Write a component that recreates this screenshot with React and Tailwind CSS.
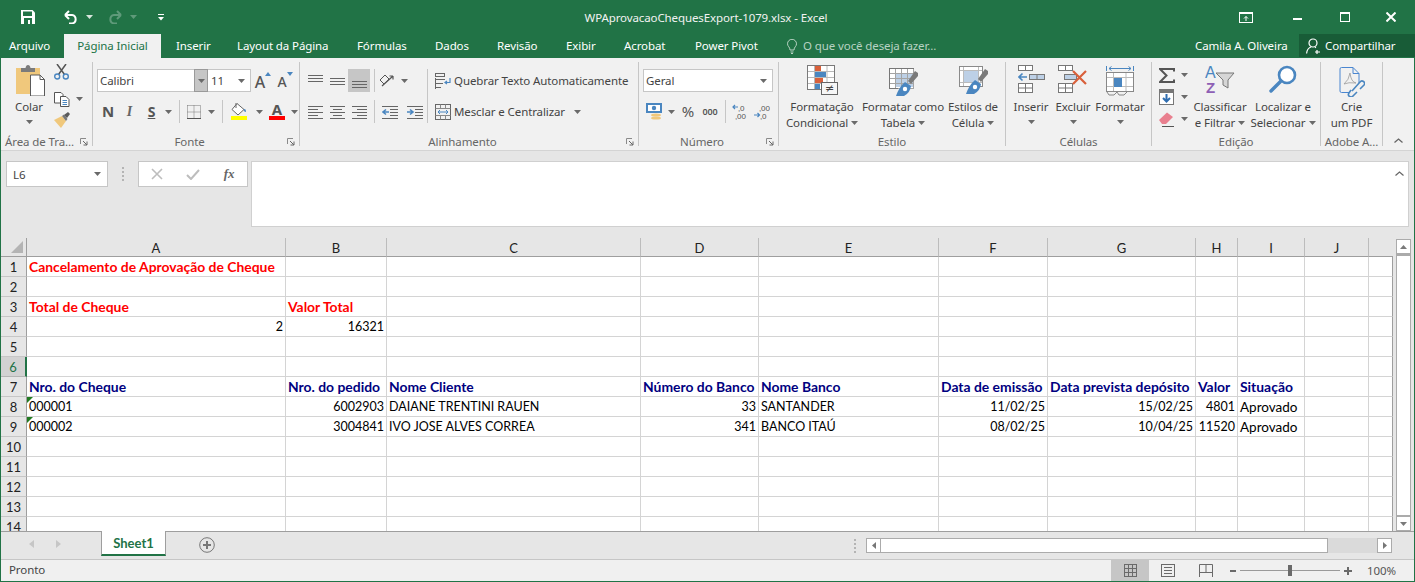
import React from "react";

const S = ({ w, h, children, className = "" }) => (
  <svg width={w} height={h} viewBox={`0 0 ${w} ${h}`} className={`shrink-0 block ${className}`}>{children}</svg>
);
const Caret = ({ c = "#6a6a6a", up }) => (
  <S w={7} h={4}><path d={up ? "M0 4 L3.5 0 L7 4Z" : "M0 0 H7 L3.5 4Z"} fill={c} /></S>
);
const B = ({ className = "", children }) => (
  <div className={`flex items-center justify-center shrink-0 h-full ${className}`}>{children}</div>
);
const Sep = ({ className = "" }) => <div className={`w-px bg-[#c6c6c6] shrink-0 ${className}`} />;
const BL = "#4a86c0";

const Launcher = () => (
  <S w={8} h={8}>
    <path d="M0.5 6V0.5H6" fill="none" stroke="#8a8a8a" />
    <path d="M3 3L7 7M7 3.5V7H3.5" fill="none" stroke="#666" />
  </S>
);

const Group = ({ className, label, launcher, children, labelClass = "text-center" }) => (
  <div className={`flex flex-col shrink-0 h-[84px] border-r border-[#c6c6c6] ${className}`}>
    <div className="h-[75px] flex">{children}</div>
    <div className="h-[9px] flex items-center">
      <div className={`flex-1 leading-[16px] text-[#666] whitespace-nowrap ${labelClass}`}>{label}</div>
      {launcher && <div className="mr-[4px] ml-[1px]"><Launcher /></div>}
    </div>
  </div>
);

const Big = ({ className = "", icon, lines, caret, caretOwn }) => (
  <div className={`flex flex-col items-center shrink-0 ${className}`}>
    <div className="h-[37px] pt-[3px] flex justify-center">{icon}</div>
    {lines.map((l, i) => (
      <div key={i} className="h-[16px] leading-[16px] whitespace-nowrap flex items-center gap-[3px]">
        {l}
        {caret && i === lines.length - 1 && <Caret />}
      </div>
    ))}
    {caretOwn && <div className="h-[14px] flex items-center"><Caret /></div>}
  </div>
);

/* ---------- ribbon icons ---------- */
const Paste = () => (
  <S w={29} h={31} className="ml-[2px]">
    <rect x="0" y="3" width="24" height="26" fill="#f0c87c" />
    <path d="M5 7V3H9.5Q10 0 12 0T14.5 3H19V7Z" fill="#7b7b7b" />
    <path d="M14.5 10H24L28.5 14.5V31H14.5Z" fill="#fff" stroke="#5a5a5a" />
    <path d="M24 10V14.5H28.5" fill="none" stroke="#5a5a5a" />
  </S>
);
const Scissors = () => (
  <S w={15} h={16}>
    <path d="M3 0L10.5 10.5M12 0L4.5 10.5" stroke="#555" strokeWidth="1.5" fill="none" />
    <circle cx="3.2" cy="12.5" r="2.5" fill="none" stroke={BL} strokeWidth="1.4" />
    <circle cx="11.8" cy="12.5" r="2.5" fill="none" stroke={BL} strokeWidth="1.4" />
  </S>
);
const Copy = () => (
  <S w={16} h={15}>
    <path d="M.5.5H7L9 2.5V11H.5Z" fill="#fff" stroke="#555" />
    <path d="M6.5 4.5H12L15 7.5V14.5H6.5Z" fill="#fff" stroke="#555" />
    <path d="M8.5 8.5H13M8.5 10.5H13M8.5 12.5H13" stroke={BL} />
  </S>
);
const Brush = () => (
  <S w={17} h={16}>
    <path d="M0 8L8 4L12 9L7 16Z" fill="#f0c87c" />
    <path d="M8 4L10 2.5L13.5 7L12 9Z" fill="#777" />
    <path d="M10 3L14 0L16 2L13 6Z" fill="#5a5a5a" />
  </S>
);
const lines = (arr, w = 15) => (
  <S w={w} h={14}>
    {arr.map(([x, y, l, c], i) => <rect key={i} x={x} y={y} width={l} height="1" fill={c || "#666"} />)}
  </S>
);
const AlTop = () => lines([[0, 1, 15], [0, 4, 15], [0, 7, 15]]);
const AlMid = () => lines([[0, 4, 15], [0, 7, 15], [0, 10, 15]]);
const AlBot = () => lines([[0, 7, 15], [0, 10, 15], [0, 13, 15]]);
const AlL = () => lines([[0, 1, 15], [0, 4, 10], [0, 7, 15], [0, 10, 10], [0, 13, 15]]);
const AlC = () => lines([[0, 1, 15], [3, 4, 9], [0, 7, 15], [3, 10, 9], [0, 13, 15]]);
const AlR = () => lines([[0, 1, 15], [5, 4, 10], [0, 7, 15], [5, 10, 10], [0, 13, 15]]);
const Indent = ({ right }) => (
  <S w={16} h={14}>
    {[1, 13].map((y) => <rect key={y} x="0" y={y} width="16" height="1" fill="#666" />)}
    {[4, 7, 10].map((y) => <rect key={y} x="8" y={y} width="8" height="1" fill="#666" />)}
    <path d={right ? "M0 7H5M3 4.5L6 7L3 9.5" : "M7 7H2M4 4.5L1 7L4 9.5"} stroke={BL} strokeWidth="1.6" fill="none" />
  </S>
);
const Orient = () => (
  <S w={16} h={16}>
    <path d="M1 7L6 2L10 6L5 11Z" fill="none" stroke="#555" />
    <path d="M3 13L14 3M14 3H10.5M14 3V6.5" stroke="#555" strokeWidth="1.2" fill="none" />
  </S>
);
const Wrap = () => (
  <S w={16} h={16}>
    <rect x=".5" y=".5" width="9" height="3" fill="none" stroke="#666" />
    <path d="M0 6.5H10M0 10.5H8M0 14.5H6" stroke="#666" />
    <path d="M15 5V9.5H10.5M12 8L10 9.5L12 11" fill="none" stroke={BL} strokeWidth="1.2" />
    <rect x="0" y="5" width="1" height="11" fill="#666" />
  </S>
);
const Merge = () => (
  <S w={16} h={16}>
    <rect x=".5" y=".5" width="15" height="15" fill="none" stroke="#666" />
    <path d="M.5 4.5H15.5M.5 11.5H15.5M5.5.5V4.5M10.5.5V4.5M5.5 11.5V15.5M10.5 11.5V15.5" stroke="#888" />
    <path d="M3 8H13M5 6L3 8L5 10M11 6L13 8L11 10" stroke={BL} fill="none" />
  </S>
);
const Borders = () => (
  <S w={14} h={14}>
    <path d="M.5 .5H13.5V13M.5 .5V13M7 .5V13M.5 7H13.5" stroke="#777" strokeDasharray="1 1" fill="none" />
    <rect x="0" y="13" width="14" height="1" fill="#555" />
  </S>
);
const Fill = () => (
  <S w={16} h={17}>
    <path d="M6 0.5L13 6.5L7 12L1 6.5Z" fill="#fff" stroke="#666" />
    <path d="M5 0V5" stroke="#666" />
    <path d="M12.5 6.5Q15 5 15 9Q13 9 12.5 6.5Z" fill={BL} />
    <rect x="0" y="13" width="16" height="4" fill="#ffff00" />
  </S>
);
const FontColor = () => (
  <div className="flex flex-col items-center w-[16px]">
    <span className="text-[15px] leading-[13px] font-bold text-[#555]">A</span>
    <div className="w-[16px] h-[4px] bg-[#ff0000]" />
  </div>
);
const Grow = ({ down, small }) => (
  <div className="flex items-start">
    <span className={`${small ? "text-[14px]" : "text-[16px]"} font-medium text-[#555] leading-[18px] mt-[3px]`}>A</span>
    <S w={6} h={4} className="mt-[2px]"><path d={down ? "M0 0H6L3 4Z" : "M0 4H6L3 0Z"} fill={BL} /></S>
  </div>
);
const Currency = () => (
  <S w={17} h={18}>
    <rect x="0" y="0" width="16" height="10" fill={BL} />
    <rect x="2" y="2" width="12" height="6" fill="#fff" />
    <circle cx="8" cy="5" r="2.2" fill={BL} />
    <ellipse cx="10" cy="12" rx="5" ry="1.6" fill="#f0c87c" />
    <ellipse cx="10" cy="15" rx="5" ry="1.6" fill="#f0c87c" />
  </S>
);
const Dec = ({ more }) => (
  <S w={16} h={16}>
    <text x={more ? 5 : 6} y="6.5" fontSize="8" fill="#555" fontFamily="Liberation Sans">{more ? ",00" : ",0"}</text>
    <text x={more ? 6 : 3} y="15" fontSize="8" fill="#555" fontFamily="Liberation Sans">{more ? ",0" : ",00"}</text>
    <path d={more ? "M0 11H5M3.5 9L5.5 11L3.5 13" : "M6 3H1M3 1L1 3L3 5"} stroke={BL} strokeWidth="1.2" fill="none" />
  </S>
);
const tableGrid = (x, y, cols, rows, cw, ch, c = "#7a7a7a") => {
  const out = [];
  for (let i = 0; i <= cols; i++) out.push(<rect key={`c${i}`} x={x + i * cw} y={y} width="1" height={rows * ch + 1} fill={c} />);
  for (let i = 0; i <= rows; i++) out.push(<rect key={`r${i}`} x={x} y={y + i * ch} width={cols * cw + 1} height="1" fill={c} />);
  return out;
};
const CondFmt = () => (
  <S w={31} h={30}>
    <rect x=".5" y=".5" width="27" height="24" fill="#fff" stroke="#7a7a7a" />
    <rect x="8" y="1" width="6" height="5" fill="#d9603b" />
    <rect x="8" y="7" width="11" height="5" fill={BL} />
    <rect x="8" y="13" width="8" height="5" fill="#d9603b" />
    <rect x="8" y="19" width="5" height="5" fill={BL} />
    <path d="M7.5 1V24M20 1V24M1 6.5H27M1 12.5H27M1 18.5H27" stroke="#b8b8b8" fill="none" />
    <rect x="14.5" y="17.5" width="16" height="12" fill="#f6f6f6" stroke="#666" />
    <text x="22.5" y="27" fontSize="11" textAnchor="middle" fill="#444" fontFamily="DejaVu Sans">≠</text>
  </S>
);
const BrushPart = () => (
  <>
    <path d="M19 13L26 3L29 5V8L22 16Z" fill="#7a7a7a" />
    <path d="M7 28Q10 19 16 14L22 18Q21 25 15 28Z" fill={BL} />
    <circle cx="16" cy="21" r="2.2" fill="#fff" />
  </>
);
const FormatTable = () => (
  <S w={29} h={28} className="mt-[3px]">
    <rect x="0" y="0" width="25" height="20" fill="#fff" />
    <rect x="7" y="5" width="17" height="14" fill="#bdd0e6" />
    {tableGrid(0, 0, 4, 4, 6, 5, "#a4a4a4")}
    <rect x="0" y="0" width="25" height="1" fill="#777" />
    <rect x="0" y="0" width="1" height="21" fill="#777" />
    <rect x="0" y="20" width="9" height="1" fill="#777" />
    <BrushPart />
  </S>
);
const CellStyle = () => (
  <S w={29} h={28} className="mt-[1px]">
    <rect x=".5" y=".5" width="23" height="20" fill="#fff" stroke="#8a8a8a" />
    <rect x="5" y="5" width="14" height="11" fill="#bdd0e6" />
    <path d="M4.5 1V20M19.5 1V20M1 4.5H23M1 16.5H23" stroke="#bbb" fill="none" />
    <BrushPart />
  </S>
);
const InsertCells = () => (
  <S w={27} h={28}>
    <rect x=".5" y=".5" width="14" height="5" fill="#fff" stroke="#777" />
    <path d="M7.5 1V5" stroke="#777" />
    <rect x="11.5" y="9.5" width="15" height="5" fill="#bdd0e6" stroke="#777" />
    <path d="M19 10V14" stroke="#777" />
    <path d="M1 12H9M4.5 8.5L1 12L4.5 15.5" stroke={BL} strokeWidth="1.6" fill="none" />
    <rect x=".5" y="18.5" width="14" height="9" fill="#fff" stroke="#777" />
    <path d="M7.5 19V27M1 23H14" stroke="#777" />
  </S>
);
const DeleteCells = () => (
  <S w={30} h={28}>
    <rect x=".5" y=".5" width="14" height="5" fill="#fff" stroke="#777" />
    <path d="M7.5 1V5" stroke="#777" />
    <rect x="6.5" y="9.5" width="12" height="5" fill="#bdd0e6" stroke="#777" />
    <rect x=".5" y="18.5" width="14" height="9" fill="#fff" stroke="#777" />
    <path d="M7.5 19V27M1 23H14" stroke="#777" />
    <path d="M15 6L28 19M28 6L15 19" stroke="#d9603b" strokeWidth="2.2" fill="none" />
  </S>
);
const FormatCells = () => (
  <S w={28} h={31}>
    <path d="M.5 1V6M27.5 1V6M3 3.5H25M5.5 1.5L3 3.5L5.5 5.5M22.5 1.5L25 3.5L22.5 5.5" stroke={BL} fill="none" />
    <rect x=".5" y="7.5" width="27" height="19" fill="#fff" stroke="#888" />
    <path d="M7.5 8V26M20 8V26M1 12.5H27M1 21.5H27" stroke="#bbb" fill="none" />
    <rect x="8" y="13" width="8" height="9" fill={BL} />
    <path d="M1 27L3 30H8L11 27M11 27L13 30H18L21 27" stroke="#888" fill="none" />
  </S>
);
const Sigma = () => (
  <S w={16} h={15}>
    <path d="M15 3.5V1H1L7.5 7.5L1 14H15V11.5" stroke="#555" strokeWidth="2" fill="none" />
  </S>
);
const FillDown = () => (
  <S w={15} h={16}>
    <rect x=".5" y=".5" width="14" height="15" fill="#fff" stroke="#777" />
    <rect x="0" y="0" width="15" height="4" fill="#777" />
    <path d="M7.5 5V12M4 9L7.5 12.5L11 9" stroke="#2f6db0" strokeWidth="2" fill="none" />
  </S>
);
const Eraser = () => (
  <S w={15} h={15}>
    <path d="M0 8L8 0.5L14 5L7 12H3Z" fill="#e9808f" />
    <rect x="3" y="14" width="12" height="1" fill="#555" />
  </S>
);
const SortFilter = () => (
  <S w={30} h={28} className="mt-[1px]">
    <text x="0" y="12" fontSize="16" fill={BL} fontFamily="Liberation Sans">A</text>
    <text x="1" y="27" fontSize="15" fontWeight="bold" fill="#8e5fb5" fontFamily="Liberation Sans">Z</text>
    <path d="M11 7H29L23 14V22L18 19V14Z" fill="#d6d6d6" stroke="#777" />
  </S>
);
const Search = () => (
  <S w={28} h={28}>
    <circle cx="18" cy="10" r="8" fill="#fff" stroke={BL} strokeWidth="2.6" />
    <path d="M12 16L2 26" stroke={BL} strokeWidth="3.4" strokeLinecap="round" />
  </S>
);
const Pdf = () => (
  <S w={26} h={30} className="mt-[2px]">
    <path d="M1 2Q1 .5 2.5 .5H14L20 6.5V16M11 25.5H2.5Q1 25.5 1 24V2" fill="none" stroke="#4a86d0" />
    <path d="M14 .5V6.5H20" stroke="#4a86d0" fill="none" />
    <path d="M5 17Q10 13 11 6Q12 15 17 16Q9 15 5 17Z" fill="none" stroke="#9a9a9a" strokeWidth=".8" />
    <path d="M13 24L21 15a2.5 2.5 0 0 1 4 3L21 22M12 23L10 26a2.5 2.5 0 0 0 4 3L18 25" stroke="#4a86c0" strokeWidth="1.6" fill="none" />
  </S>
);

/* ---------- sheet data ---------- */
const colLetters = ["A", "B", "C", "D", "E", "F", "G", "H", "I", "J", ""];
const R = "text-[#ff0000] font-bold text-[13.9px]";
const N = "text-[#000080] font-bold text-[13.9px]";
const T = "text-black text-[12.5px]";
const TR = "text-black text-[12.5px] text-right";
const M = "text-black text-[13.5px]";
const rows = {
  1: { A: ["Cancelamento de Aprovação de Cheque", R] },
  3: { A: ["Total de Cheque", R], B: ["Valor Total", R] },
  4: { A: ["2", TR], B: ["16321", TR] },
  7: {
    A: ["Nro. do Cheque", N], B: ["Nro. do pedido", N], C: ["Nome Cliente", N], D: ["Número do Banco", N],
    E: ["Nome Banco", N], F: ["Data de emissão", N], G: ["Data prevista depósito", N], H: ["Valor", N], I: ["Situação", N],
  },
  8: {
    A: ["000001", T, true], B: ["6002903", TR], C: ["DAIANE TRENTINI RAUEN", T], D: ["33", TR],
    E: ["SANTANDER", T], F: ["11/02/25", TR], G: ["15/02/25", TR], H: ["4801", TR], I: ["Aprovado", M],
  },
  9: {
    A: ["000002", T, true], B: ["3004841", TR], C: ["IVO JOSE ALVES CORREA", T], D: ["341", TR],
    E: ["BANCO ITAÚ", T], F: ["08/02/25", TR], G: ["10/04/25", TR], H: ["11520", TR], I: ["Aprovado", M],
  },
};
const CELL = "[font-family:Lato,sans-serif] tracking-normal";

const Tab = ({ className, children }) => (
  <div className={`shrink-0 whitespace-nowrap text-white ${className}`}>{children}</div>
);

export default function App() {
  return (
    <div className="w-[1415px] h-[582px] overflow-hidden bg-[#217346] px-px pb-px flex flex-col font-['Noto_Sans',sans-serif] text-[11.5px] tracking-[-0.1px] text-[#444]">
      {/* title bar */}
      <div className="h-[34px] -mx-px flex items-center shrink-0 text-white">
        <div className="ml-[21px]">
          <S w={14} h={14}>
            <path d="M0 0H11.5L14 2.5V14H0Z" fill="#fff" />
            <rect x="2" y="1.5" width="9" height="4.5" fill="#217346" />
            <rect x="3" y="8" width="8" height="6" fill="#217346" />
            <rect x="7" y="10" width="2" height="4" fill="#fff" />
          </S>
        </div>
        <div className="ml-[28px]">
          <S w={15} h={14}>
            <path d="M2 5L6 1M2 5L6 9M2 5H9A4.3 4.3 0 0 1 9 13.5H6" stroke="#fff" strokeWidth="2" fill="none" />
          </S>
        </div>
        <div className="ml-[8px]"><Caret c="#d8e6dd" /></div>
        <div className="ml-[15px]">
          <S w={15} h={14}>
            <path d="M13 5L9 1M13 5L9 9M13 5H6A4.3 4.3 0 0 0 6 13.5H9" stroke="#5f9a7a" strokeWidth="2" fill="none" />
          </S>
        </div>
        <div className="ml-[7px]"><Caret c="#5f9a7a" /></div>
        <div className="ml-[21px]">
          <S w={6} h={7}>
            <rect x="0" y="0" width="6" height="1" fill="#fff" />
            <path d="M0 3H6L3 6.5Z" fill="#fff" />
          </S>
        </div>
        <div className="ml-[419px] w-[246px] pt-[2px] text-center whitespace-nowrap text-[#f2f2f2]">WPAprovacaoChequesExport-1079.xlsx - Excel</div>
        <div className="ml-auto flex items-center">
          <S w={14} h={11}>
            <rect x=".5" y=".5" width="13" height="10" fill="none" stroke="#fff" />
            <rect x="0" y="0" width="14" height="2" fill="#fff" />
            <path d="M7 9V4.5M5 6.5L7 4.5L9 6.5" stroke="#fff" fill="none" />
          </S>
          <div className="ml-[40px]"><div className="w-[9px] h-[2px] bg-white mt-[3px]" /></div>
          <div className="ml-[38px]"><div className="w-[10px] h-[10px] border border-t-2 border-white" /></div>
          <div className="ml-[36px] mr-[19px]">
            <S w={10} h={10}><path d="M.5.5L9.5 9.5M9.5.5L.5 9.5" stroke="#fff" strokeWidth="2" /></S>
          </div>
        </div>
      </div>

      {/* tabs */}
      <div className="h-[24px] -mx-px flex items-stretch shrink-0 leading-[24px]">
        <Tab className="w-[64px] pl-[9px]">Arquivo</Tab>
        <div className="w-[97px] shrink-0 bg-[#f1f1f1] text-[#217346] text-center whitespace-nowrap">Página Inicial</div>
        <Tab className="w-[76px] pl-[15px]">Inserir</Tab>
        <Tab className="w-[120px]">Layout da Página</Tab>
        <Tab className="w-[78px]">Fórmulas</Tab>
        <Tab className="w-[62px]">Dados</Tab>
        <Tab className="w-[69px]">Revisão</Tab>
        <Tab className="w-[58px]">Exibir</Tab>
        <Tab className="w-[71px]">Acrobat</Tab>
        <Tab className="w-[92px]">Power Pivot</Tab>
        <div className="flex items-center w-[408px] shrink-0">
          <S w={10} h={15}>
            <path d="M3 11C3 8 .5 7.5 .5 4.8A4.5 4.5 0 0 1 9.5 4.8C9.5 7.5 7 8 7 11ZM3.5 13H6.5M4 14.5H6" stroke="#b7d2c2" fill="none" />
          </S>
          <span className="ml-[6px] text-[#b7d2c2] whitespace-nowrap">O que você deseja fazer...</span>
        </div>
        <Tab className="w-[104px]">Camila A. Oliveira</Tab>
        <div className="w-[116px] shrink-0 h-[23px] bg-[#185c37] flex items-center text-white leading-[23px]">
          <div className="ml-[7px]">
            <S w={15} h={16}>
              <circle cx="7" cy="5" r="4" fill="none" stroke="#fff" strokeWidth="1.2" />
              <path d="M.6 15.5C1 11 3.5 9.5 5 9M9 9.2L10 9.8M11 12V16M9 14H14" stroke="#fff" strokeWidth="1.2" fill="none" />
            </S>
          </div>
          <span className="ml-[4px] whitespace-nowrap">Compartilhar</span>
        </div>
      </div>

      {/* ribbon */}
      <div className="h-[93px] shrink-0 bg-[#f1f1f1] border-b border-[#d4d4d4] flex pt-[4px]">
        <Group className="w-[92px]" label="Área de Tra..." launcher labelClass="text-left pl-[4px]">
          <Big className="w-[46px] ml-[5px]" icon={<Paste />} lines={["Colar"]} caretOwn />
          <div className="flex flex-col pl-[2px] w-[38px]">
            <div className="h-[24px] pt-[2px]"><Scissors /></div>
            <div className="h-[24px] flex items-center pt-[2px]"><Copy /><div className="ml-[6px]"><Caret /></div></div>
            <div className="h-[20px] pt-[2px]"><Brush /></div>
          </div>
        </Group>

        <Group className="w-[207px]" label="Fonte" launcher>
          <div className="flex flex-col pl-[4px] pt-[7px]">
            <div className="flex h-[23px]">
              <div className="w-[111px] h-full bg-white border border-[#c6c6c6] flex items-center pl-[2px]">
                <span className="flex-1">Calibri</span>
                <div className="w-[14px] h-[23px] -mr-px bg-[#c6c6c6] border border-[#9a9a9a] flex items-center justify-center"><Caret /></div>
              </div>
              <div className="w-[43px] h-full bg-white border border-l-0 border-[#c6c6c6] flex items-center pl-[3px] pr-[5px]">
                <span className="flex-1">11</span><Caret />
              </div>
              <B className="w-[22px] ml-[1px]"><Grow /></B>
              <B className="w-[22px]"><Grow down small /></B>
            </div>
            <div className="flex h-[23px] mt-[8px]">
              <B className="w-[22px] text-[15px] font-bold text-[#555]">N</B>
              <B className="w-[21px] text-[14px] font-bold italic text-[#666] [font-family:'Liberation_Serif',serif]">I</B>
              <B className="w-[23px] text-[14px] font-bold text-[#555] underline">S</B>
              <B className="w-[10px]"><Caret /></B>
              <Sep className="ml-[6px]" />
              <B className="w-[28px]"><Borders /></B>
              <B className="w-[7px]"><Caret /></B>
              <Sep className="ml-[7px]" />
              <B className="w-[31px]"><Fill /></B>
              <B className="w-[10px]"><Caret /></B>
              <B className="w-[26px]"><FontColor /></B>
              <B className="w-[8px]"><Caret /></B>
            </div>
          </div>
        </Group>

        <Group className="w-[339px]" label="Alinhamento" launcher>
          <div className="flex pt-[7px] pl-[4px] h-[61px]">
            <div className="flex flex-col w-[123px]">
              <div className="flex h-[23px]">
                <B className="w-[22px]"><AlTop /></B>
                <B className="w-[22px]"><AlMid /></B>
                <B className="w-[22px] bg-[#c6c6c6]"><AlBot /></B>
                <Sep className="ml-[4px]" />
                <B className="w-[24px]"><Orient /></B>
                <B className="w-[10px]"><Caret /></B>
              </div>
              <div className="flex h-[23px] mt-[8px]">
                <B className="w-[22px]"><AlL /></B>
                <B className="w-[22px]"><AlC /></B>
                <B className="w-[22px]"><AlR /></B>
                <Sep className="ml-[4px]" />
                <B className="w-[30px]"><Indent /></B>
                <B className="w-[20px]"><Indent right /></B>
              </div>
            </div>
            <Sep className="h-[54px]" />
            <div className="flex flex-col pl-[7px]">
              <div className="flex items-center h-[23px] whitespace-nowrap"><Wrap /><span className="ml-[3px]">Quebrar Texto Automaticamente</span></div>
              <div className="flex items-center h-[23px] mt-[8px] whitespace-nowrap">
                <Merge /><span className="ml-[3px]">Mesclar e Centralizar</span><div className="ml-[9px]"><Caret /></div>
              </div>
            </div>
          </div>
        </Group>

        <Group className="w-[140px]" label="Número" launcher>
          <div className="flex flex-col pl-[4px] pt-[7px]">
            <div className="w-[130px] h-[23px] bg-white border border-[#c6c6c6] flex items-center pl-[2px] pr-[5px]">
              <span className="flex-1">Geral</span><Caret />
            </div>
            <div className="flex h-[23px] mt-[8px]">
              <B className="w-[22px]"><Currency /></B>
              <B className="w-[12px]"><Caret /></B>
              <B className="w-[22px] text-[15px] text-[#555]">%</B>
              <B className="w-[22px] text-[9px] font-semibold text-[#555]">000</B>
              <Sep className="ml-[4px]" />
              <B className="w-[28px]"><Dec /></B>
              <B className="w-[16px]"><Dec more /></B>
            </div>
          </div>
        </Group>

        <Group className="w-[227px]" label="Estilo">
          <div className="flex pl-[2px]">
            <Big className="w-[82px]" icon={<CondFmt />} lines={["Formatação", "Condicional"]} caret />
            <Big className="w-[80px]" icon={<FormatTable />} lines={["Formatar como", "Tabela"]} caret />
            <Big className="w-[60px]" icon={<CellStyle />} lines={["Estilos de", "Célula"]} caret />
          </div>
        </Group>

        <Group className="w-[146px]" label="Células">
          <div className="flex pl-[4px]">
            <Big className="w-[42px]" icon={<InsertCells />} lines={["Inserir"]} caretOwn />
            <Big className="w-[42px]" icon={<DeleteCells />} lines={["Excluir"]} caretOwn />
            <Big className="w-[52px]" icon={<FormatCells />} lines={["Formatar"]} caretOwn />
          </div>
        </Group>

        <Group className="w-[169px]" label="Edição">
          <div className="flex">
            <div className="w-[38px] flex flex-col pl-[7px] pt-[2px]">
              <div className="h-[22px] flex items-center"><Sigma /><div className="ml-[6px]"><Caret /></div></div>
              <div className="h-[22px] flex items-center"><FillDown /><div className="ml-[7px]"><Caret /></div></div>
              <div className="h-[22px] flex items-center"><Eraser /><div className="ml-[7px]"><Caret /></div></div>
            </div>
            <Big className="w-[60px]" icon={<SortFilter />} lines={["Classificar", "e Filtrar"]} caret />
            <Big className="w-[66px]" icon={<Search />} lines={["Localizar e", "Selecionar"]} caret />
          </div>
        </Group>

        <Group className="w-[62px]" label="Adobe A...">
          <Big className="w-[61px]" icon={<Pdf />} lines={["Crie", "um PDF"]} />
        </Group>

        <div className="flex-1 flex justify-end items-end pb-[7px] pr-[11px]">
          <S w={9} h={5}><path d="M.5 4.5L4.5 1L8.5 4.5" stroke="#666" strokeWidth="1.3" fill="none" /></S>
        </div>
      </div>

      {/* formula bar */}
      <div className="h-[87px] shrink-0 bg-[#e6e6e6] flex items-start pt-[10px] pl-[5px]">
        <div className="w-[102px] h-[26px] bg-white border border-[#c6c6c6] flex items-center pl-[6px] pr-[6px]">
          <span className="flex-1 pt-[1px] text-[#444]">L6</span><Caret />
        </div>
        <div className="w-[30px] h-[26px] flex flex-col items-center justify-center gap-[2px]">
          <div className="w-[2px] h-[2px] bg-[#b4b4b4]" />
          <div className="w-[2px] h-[2px] bg-[#b4b4b4]" />
          <div className="w-[2px] h-[2px] bg-[#b4b4b4]" />
          <div className="w-[2px] h-[2px] bg-[#b4b4b4]" />
        </div>
        <div className="w-[110px] h-[26px] bg-white border border-[#c6c6c6] flex items-center">
          <B className="w-[36px]"><S w={12} h={12}><path d="M1 1L11 11M11 1L1 11" stroke="#bdbdbd" strokeWidth="1.6" /></S></B>
          <B className="w-[36px]"><S w={14} h={11}><path d="M1 6L5 10L13 1" stroke="#bdbdbd" strokeWidth="2" fill="none" /></S></B>
          <B className="w-[36px] [font-family:'Liberation_Serif',serif] italic font-bold text-[13px] text-[#666]">fx</B>
        </div>
        <div className="ml-[3px] w-[1158px] h-[66px] bg-white border border-[#d0d0d0] flex justify-end pt-[9px] pr-[4px]">
          <S w={9} h={5}><path d="M.5 4.5L4.5 1L8.5 4.5" stroke="#666" strokeWidth="1.2" fill="none" /></S>
        </div>
      </div>

      {/* sheet */}
      <div className="h-[293px] shrink-0 flex bg-[#e6e6e6] overflow-hidden">
        <div className="w-[1392px] h-[293px] overflow-hidden grid grid-cols-[26px_259px_101px_254px_118px_180px_109px_148px_42px_67px_64px_24px] grid-rows-[19px] auto-rows-[20px]">
          <div className="border-r border-b border-[#9e9e9e] flex items-end justify-end pr-[3px] pb-[3px]">
            <S w={12} h={12}><path d="M12 0V12H0Z" fill="#b4b4b4" /></S>
          </div>
          {colLetters.map((c, i) => (
            <div key={i} className={`border-b border-[#9e9e9e] text-center leading-[20px] text-[#222] text-[13px] ${CELL} ${i < 10 ? "border-r border-r-[#bcbcbc]" : ""}`}>{c}</div>
          ))}
          {Array.from({ length: 14 }, (_, i) => i + 1).flatMap((r) => {
            const head = (
              <div
                key={`h${r}`}
                className={`${CELL} text-[13px] text-center leading-[20px] border-b ${
                  r === 6
                    ? "bg-[#d2d2d2] text-[#217346] border-r-2 border-r-[#217346] border-b-[#b4b4b4]"
                    : "bg-[#e6e6e6] text-[#222] border-r border-r-[#9e9e9e] border-b-[#c6c6c6]"
                }`}
              >
                {r}
              </div>
            );
            const cells = ["A", "B", "C", "D", "E", "F", "G", "H", "I", "J", "K"].map((col) => {
              const d = rows[r] && rows[r][col];
              return (
                <div
                  key={`${col}${r}`}
                  className={`relative bg-white border-b border-r border-b-[#d4d4d4] ${col === "K" ? "border-r-[#9e9e9e]" : "border-r-[#d4d4d4]"} ${CELL} leading-[20px] px-[2px] whitespace-nowrap ${d ? d[1] : ""}`}
                >
                  {d && d[2] && (
                    <svg width="6" height="6" viewBox="0 0 6 6" className="absolute left-0 top-0"><path d="M0 0H6L0 6Z" fill="#217a21" /></svg>
                  )}
                  {d ? d[0] : ""}
                </div>
              );
            });
            return [head, ...cells];
          })}
        </div>
        <div className="flex-1 flex flex-col items-center pt-[1px] pl-[2px] pr-[3px]">
          <div className="w-[15px] h-[15px] bg-white border border-[#ababab] flex items-center justify-center"><Caret c="#7a7a7a" up /></div>
          <div className="w-[15px] flex-1 bg-white border border-[#ababab] border-t-2" />
          <div className="w-[15px] h-[15px] bg-white border border-[#ababab] flex items-center justify-center"><Caret c="#7a7a7a" /></div>
        </div>
      </div>

      {/* sheet tabs */}
      <div className="h-[28px] shrink-0 bg-[#e6e6e6] border-t border-[#9e9e9e] flex">
        <div className="w-[100px] flex items-center pl-[28px] gap-[22px] pb-[4px]">
          <S w={5} h={8}><path d="M5 0V8L0 4Z" fill="#c6c6c6" /></S>
          <S w={5} h={8}><path d="M0 0V8L5 4Z" fill="#c6c6c6" /></S>
        </div>
        <div className="w-[65px] h-[25px] -mt-px bg-white border-x border-[#9e9e9e] border-b-2 border-b-[#217346] text-center font-bold text-[#217346] leading-[24px] [font-family:Lato,sans-serif] tracking-normal text-[13px]">Sheet1</div>
        <div className="ml-[33px] mt-[5px]">
          <S w={16} h={16}>
            <circle cx="8" cy="8" r="7.3" fill="none" stroke="#777" />
            <path d="M4 8H12M8 4V12" stroke="#777" strokeWidth="2" />
          </S>
        </div>
        <div className="ml-[637px] flex flex-col gap-[2px] pt-[7px] pl-[2px]">
          <div className="w-[2px] h-[2px] bg-[#b4b4b4]" />
          <div className="w-[2px] h-[2px] bg-[#b4b4b4]" />
          <div className="w-[2px] h-[2px] bg-[#b4b4b4]" />
          <div className="w-[2px] h-[2px] bg-[#b4b4b4]" />
        </div>
        <div className="ml-[10px] mt-[6px] h-[15px] w-[526px] flex">
          <div className="w-[15px] bg-white border border-[#ababab] flex items-center justify-center">
            <S w={4} h={7}><path d="M4 0V7L0 3.5Z" fill="#777" /></S>
          </div>
          <div className="w-[447px] bg-white border-y border-r border-[#ababab]" />
          <div className="flex-1 bg-[#dadada]" />
          <div className="w-[15px] bg-white border border-[#ababab] flex items-center justify-center">
            <S w={4} h={7}><path d="M0 0V7L4 3.5Z" fill="#777" /></S>
          </div>
        </div>
      </div>

      {/* status bar */}
      <div className="flex-1 bg-[#f0f0f0] border-t border-[#c6c6c6] flex items-stretch">
        <div className="pl-[8px] w-[1110px] leading-[20px]">Pronto</div>
        <div className="w-[38px] bg-[#c6c6c6] flex items-center justify-center">
          <S w={13} h={13}>{tableGrid(0, 0, 3, 3, 4, 4, "#6a6a6a")}</S>
        </div>
        <div className="w-[38px] flex items-center justify-center">
          <S w={14} h={13}>
            <rect x=".5" y=".5" width="13" height="12" fill="none" stroke="#6a6a6a" />
            <path d="M3 3.5H11M3 6.5H11M3 9.5H11" stroke="#6a6a6a" />
          </S>
        </div>
        <div className="w-[38px] flex items-center justify-center">
          <S w={14} h={13}>
            <path d="M.5 13V.5H13.5V13M.5 8.5H13.5M7 .5V8.5" stroke="#6a6a6a" fill="none" />
          </S>
        </div>
        <div className="flex items-center ml-[5px]">
          <div className="w-[6px] h-[2px] bg-[#6a6a6a]" />
          <div className="ml-[4px] w-[100px] h-px bg-[#9a9a9a] flex items-center justify-center">
            <div className="w-[4px] h-[11px] bg-[#6a6a6a] shrink-0" />
          </div>
          <div className="ml-[4px]">
            <S w={8} h={8}><path d="M0 4H8M4 0V8" stroke="#6a6a6a" strokeWidth="2" /></S>
          </div>
          <div className="ml-[15px] text-[#555]">100%</div>
        </div>
      </div>
    </div>
  );
}
